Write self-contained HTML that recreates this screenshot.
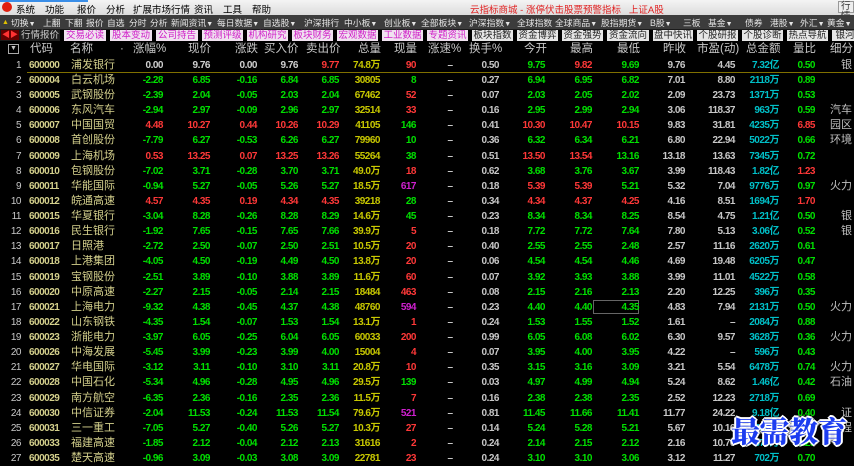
<!DOCTYPE html>
<html><head><meta charset="utf-8"><style>
*{margin:0;padding:0;box-sizing:border-box}
body{width:854px;height:461px;overflow:hidden;background:#000;font-family:"Liberation Sans","Noto Sans CJK SC",sans-serif;position:relative}
.menu{position:absolute;left:0;top:0;width:854px;height:15px;background:linear-gradient(#f4f4f4,#dcdcdc);font-size:9.5px;color:#000}
.menu span{position:absolute;top:2px}
.tb{position:absolute;left:0;top:15px;width:854px;height:14px;background:#3c3c3c;font-size:8.8px;color:#e4e4e4}
.tb span{position:absolute;top:1px;white-space:nowrap}
.tb i{font-style:normal;font-size:7px}
.tabs{position:absolute;left:0;top:29px;width:854px;height:12px;background:#1a1a1a;font-size:9.5px}
.tab{position:absolute;top:1px;height:11px;line-height:11px;text-align:center;background:#f0e2f0;color:#d020c8;border-right:4px solid #000}
.tab.d{background:#e6e6e6;color:#222}
.hd{position:absolute;left:0;top:41px;width:854px;height:16px;font-size:11.5px;color:#c8c8c8;line-height:16px}
.hd span{position:absolute;white-space:nowrap}
.r{position:absolute;left:0;width:854px;height:15px;line-height:15px;font-size:10px;font-weight:bold;letter-spacing:-0.5px}
.r span{position:absolute;top:0;text-align:right;white-space:nowrap}
.r .n{left:0;width:21px;color:#c8c8c8;font-weight:normal}
.r .cd{left:29px;color:#d4d08c;text-align:left}
.r .nm{left:71px;color:#d4d08c;text-align:left;font-size:11px;font-weight:normal;letter-spacing:0}
.a{left:120px;width:43px}.b{left:165px;width:45px}.c{left:212px;width:45px}.d{left:258px;width:40px}.e{left:299px;width:40px}.f{left:335px;width:45px;color:#c8c800}.g{left:382px;width:34px}
.h{left:440px;width:20px;text-align:center!important;color:#c8c8c8}.i{left:460px;width:39px;color:#c8c8c8}.j{left:500px;width:45px}.k{left:546px;width:46px}.l{left:593px;width:46px}.m{left:640px;width:45px;color:#c8c8c8}.o{left:686px;width:49px;color:#c8c8c8}.p{left:730px;width:49px;color:#00c0c8}.q{left:780px;width:35px}.s{left:830px;text-align:left!important;color:#c0c0c0;font-weight:normal;font-size:11px;letter-spacing:0}
.G{color:#00e000}.R{color:#ff3838}.W{color:#d0d0d0}.M{color:#d020d0}
.wm{position:absolute;left:731px;top:410px;font-family:"Noto Serif CJK SC","Liberation Serif",serif;font-weight:900;font-size:29px;color:#1c3cf0;text-shadow:-1px -1px 0 #fff,1px -1px 0 #fff,-1px 1px 0 #fff,1px 1px 0 #fff,0 2px 0 #fff,2px 0 0 #fff,0 -2px 0 #fff,-2px 0 0 #fff;letter-spacing:0}
</style></head><body>
<div class="menu">
<div style="position:absolute;left:0;top:0;width:88px;height:2px;background:#3a8ee8"></div>
<div style="position:absolute;left:2px;top:2px;width:10px;height:10px;border-radius:50%;background:#e02010"></div>
<span style="left:16px">系统</span><span style="left:45px">功能</span><span style="left:77px">报价</span><span style="left:106px">分析</span><span style="left:133px">扩展市场行情</span><span style="left:194px">资讯</span><span style="left:223px">工具</span><span style="left:252px">帮助</span>
<span style="left:470px;color:#e02020">云指标商城 - 涨停伏击股票预警指标 &nbsp;&nbsp;上证A股</span>
<span style="left:838px;top:1px;border:1px solid #999;background:#eee;padding:0 2px;height:12px;line-height:10px;color:#333">行情</span>
</div>
<div class="tb">
<span style="left:2px;color:#e0c000"><i>▲</i></span>
<span style="left:11px">切换<i>▼</i></span><span style="left:43px">上翻</span><span style="left:65px">下翻</span><span style="left:86px">报价</span><span style="left:107px">自选</span><span style="left:129px">分时</span><span style="left:150px">分析</span><span style="left:171px">新闻资讯<i>▼</i></span><span style="left:217px">每日数据<i>▼</i></span><span style="left:263px">自选股<i>▼</i></span><span style="left:304px">沪深排行</span><span style="left:344px">中小板<i>▼</i></span><span style="left:384px">创业板<i>▼</i></span><span style="left:421px">全部板块<i>▼</i></span><span style="left:469px">沪深指数<i>▼</i></span><span style="left:517px">全球指数</span><span style="left:555px">全球商品<i>▼</i></span><span style="left:601px">股指期货<i>▼</i></span><span style="left:650px">B股<i>▼</i></span><span style="left:683px">三板</span><span style="left:708px">基金<i>▼</i></span><span style="left:745px">债券</span><span style="left:770px">港股<i>▼</i></span><span style="left:800px">外汇<i>▼</i></span><span style="left:827px">黄金<i>▼</i></span>
</div>
<div class="tabs">
<span style="position:absolute;left:1px;top:1px;width:18px;height:10px;background:#600;color:#f33;font-size:8px;line-height:10px;text-align:center">◀▶</span>
<div class="tab" style="left:20px;width:44px;background:#202020;color:#ccc">行情报价</div>
<div class="tab" style="left:64px;width:46px">交易必读</div>
<div class="tab" style="left:110px;width:46px">股本变动</div>
<div class="tab" style="left:156px;width:46px">公司持告</div>
<div class="tab" style="left:202px;width:45px">预测评级</div>
<div class="tab" style="left:247px;width:45px">机构研究</div>
<div class="tab" style="left:292px;width:45px">板块财务</div>
<div class="tab" style="left:337px;width:45px">宏观数据</div>
<div class="tab" style="left:382px;width:45px">工业数据</div>
<div class="tab" style="left:427px;width:45px">专题资讯</div>
<div class="tab d" style="left:472px;width:45px">板块指数</div>
<div class="tab d" style="left:517px;width:45px">资金博弈</div>
<div class="tab d" style="left:562px;width:45px">资金强势</div>
<div class="tab d" style="left:607px;width:46px">资金流向</div>
<div class="tab d" style="left:653px;width:44px">盘中快讯</div>
<div class="tab d" style="left:697px;width:45px">个股研报</div>
<div class="tab d" style="left:742px;width:45px">个股诊断</div>
<div class="tab d" style="left:787px;width:45px">热点导航</div>
<div class="tab d" style="left:832px;width:30px">银河</div>
</div>
<div class="hd">
<span style="left:8px;top:3px;width:11px;height:10px;border:1px solid #aaa;font-size:7px;line-height:8px;text-align:center">▼</span>
<span style="left:30px">代码</span><span style="left:70px">名称</span><span style="left:120px">·</span><span style="left:133px">涨幅%</span><span style="left:188px">现价</span><span style="left:235px">涨跌</span><span style="left:264px">买入价</span><span style="left:306px">卖出价</span><span style="left:358px">总量</span><span style="left:394px">现量</span><span style="left:428px">涨速%</span><span style="left:469px">换手%</span><span style="left:524px">今开</span><span style="left:570px">最高</span><span style="left:617px">最低</span><span style="left:663px">昨收</span><span style="left:697px">市盈(动)</span><span style="left:746px">总金额</span><span style="left:793px">量比</span><span style="left:830px">细分</span>
</div>
<div style="position:absolute;left:27px;top:72px;width:827px;height:1px;background:#807000"></div>
<div style="position:absolute;left:593px;top:300px;width:46px;height:14px;border:1px solid #666"></div>

<div class="r" style="top:58px"><span class="n">1</span><span class="cd">600000</span><span class="nm">浦发银行</span><span class="a W">0.00</span><span class="b W">9.76</span><span class="c W">0.00</span><span class="d W">9.76</span><span class="e R">9.77</span><span class="f">74.8万</span><span class="g R">90</span><span class="h">–</span><span class="i">0.50</span><span class="j G">9.75</span><span class="k R">9.82</span><span class="l G">9.69</span><span class="m">9.76</span><span class="o">4.45</span><span class="p">7.32亿</span><span class="q G">0.50</span><span class="s">　银</span></div>
<div class="r" style="top:73px"><span class="n">2</span><span class="cd">600004</span><span class="nm">白云机场</span><span class="a G">-2.28</span><span class="b G">6.85</span><span class="c G">-0.16</span><span class="d G">6.84</span><span class="e G">6.85</span><span class="f">30805</span><span class="g G">8</span><span class="h">–</span><span class="i">0.27</span><span class="j G">6.94</span><span class="k G">6.95</span><span class="l G">6.82</span><span class="m">7.01</span><span class="o">8.80</span><span class="p">2118万</span><span class="q G">0.89</span></div>
<div class="r" style="top:88px"><span class="n">3</span><span class="cd">600005</span><span class="nm">武钢股份</span><span class="a G">-2.39</span><span class="b G">2.04</span><span class="c G">-0.05</span><span class="d G">2.03</span><span class="e G">2.04</span><span class="f">67462</span><span class="g R">52</span><span class="h">–</span><span class="i">0.07</span><span class="j G">2.03</span><span class="k G">2.05</span><span class="l G">2.02</span><span class="m">2.09</span><span class="o">23.73</span><span class="p">1371万</span><span class="q G">0.53</span></div>
<div class="r" style="top:103px"><span class="n">4</span><span class="cd">600006</span><span class="nm">东风汽车</span><span class="a G">-2.94</span><span class="b G">2.97</span><span class="c G">-0.09</span><span class="d G">2.96</span><span class="e G">2.97</span><span class="f">32514</span><span class="g R">33</span><span class="h">–</span><span class="i">0.16</span><span class="j G">2.95</span><span class="k G">2.99</span><span class="l G">2.94</span><span class="m">3.06</span><span class="o">118.37</span><span class="p">963万</span><span class="q G">0.59</span><span class="s">汽车</span></div>
<div class="r" style="top:118px"><span class="n">5</span><span class="cd">600007</span><span class="nm">中国国贸</span><span class="a R">4.48</span><span class="b R">10.27</span><span class="c R">0.44</span><span class="d R">10.26</span><span class="e R">10.29</span><span class="f">41105</span><span class="g G">146</span><span class="h">–</span><span class="i">0.41</span><span class="j R">10.30</span><span class="k R">10.47</span><span class="l R">10.15</span><span class="m">9.83</span><span class="o">31.81</span><span class="p">4235万</span><span class="q R">6.85</span><span class="s">园区</span></div>
<div class="r" style="top:133px"><span class="n">6</span><span class="cd">600008</span><span class="nm">首创股份</span><span class="a G">-7.79</span><span class="b G">6.27</span><span class="c G">-0.53</span><span class="d G">6.26</span><span class="e G">6.27</span><span class="f">79960</span><span class="g G">10</span><span class="h">–</span><span class="i">0.36</span><span class="j G">6.32</span><span class="k G">6.34</span><span class="l G">6.21</span><span class="m">6.80</span><span class="o">22.94</span><span class="p">5022万</span><span class="q G">0.66</span><span class="s">环境</span></div>
<div class="r" style="top:149px"><span class="n">7</span><span class="cd">600009</span><span class="nm">上海机场</span><span class="a R">0.53</span><span class="b R">13.25</span><span class="c R">0.07</span><span class="d R">13.25</span><span class="e R">13.26</span><span class="f">55264</span><span class="g G">38</span><span class="h">–</span><span class="i">0.51</span><span class="j R">13.50</span><span class="k R">13.54</span><span class="l G">13.16</span><span class="m">13.18</span><span class="o">13.63</span><span class="p">7345万</span><span class="q G">0.72</span></div>
<div class="r" style="top:164px"><span class="n">8</span><span class="cd">600010</span><span class="nm">包钢股份</span><span class="a G">-7.02</span><span class="b G">3.71</span><span class="c G">-0.28</span><span class="d G">3.70</span><span class="e G">3.71</span><span class="f">49.0万</span><span class="g R">18</span><span class="h">–</span><span class="i">0.62</span><span class="j G">3.68</span><span class="k G">3.76</span><span class="l G">3.67</span><span class="m">3.99</span><span class="o">118.43</span><span class="p">1.82亿</span><span class="q R">1.23</span></div>
<div class="r" style="top:179px"><span class="n">9</span><span class="cd">600011</span><span class="nm">华能国际</span><span class="a G">-0.94</span><span class="b G">5.27</span><span class="c G">-0.05</span><span class="d G">5.26</span><span class="e G">5.27</span><span class="f">18.5万</span><span class="g M">617</span><span class="h">–</span><span class="i">0.18</span><span class="j R">5.39</span><span class="k R">5.39</span><span class="l G">5.21</span><span class="m">5.32</span><span class="o">7.04</span><span class="p">9776万</span><span class="q G">0.97</span><span class="s">火力</span></div>
<div class="r" style="top:194px"><span class="n">10</span><span class="cd">600012</span><span class="nm">皖通高速</span><span class="a R">4.57</span><span class="b R">4.35</span><span class="c R">0.19</span><span class="d R">4.34</span><span class="e R">4.35</span><span class="f">39218</span><span class="g G">28</span><span class="h">–</span><span class="i">0.34</span><span class="j R">4.34</span><span class="k R">4.37</span><span class="l R">4.25</span><span class="m">4.16</span><span class="o">8.51</span><span class="p">1694万</span><span class="q R">1.70</span></div>
<div class="r" style="top:209px"><span class="n">11</span><span class="cd">600015</span><span class="nm">华夏银行</span><span class="a G">-3.04</span><span class="b G">8.28</span><span class="c G">-0.26</span><span class="d G">8.28</span><span class="e G">8.29</span><span class="f">14.6万</span><span class="g G">45</span><span class="h">–</span><span class="i">0.23</span><span class="j G">8.34</span><span class="k G">8.34</span><span class="l G">8.25</span><span class="m">8.54</span><span class="o">4.75</span><span class="p">1.21亿</span><span class="q G">0.50</span><span class="s">　银</span></div>
<div class="r" style="top:224px"><span class="n">12</span><span class="cd">600016</span><span class="nm">民生银行</span><span class="a G">-1.92</span><span class="b G">7.65</span><span class="c G">-0.15</span><span class="d G">7.65</span><span class="e G">7.66</span><span class="f">39.9万</span><span class="g R">5</span><span class="h">–</span><span class="i">0.18</span><span class="j G">7.72</span><span class="k G">7.72</span><span class="l G">7.64</span><span class="m">7.80</span><span class="o">5.13</span><span class="p">3.06亿</span><span class="q G">0.52</span><span class="s">　银</span></div>
<div class="r" style="top:239px"><span class="n">13</span><span class="cd">600017</span><span class="nm">日照港</span><span class="a G">-2.72</span><span class="b G">2.50</span><span class="c G">-0.07</span><span class="d G">2.50</span><span class="e G">2.51</span><span class="f">10.5万</span><span class="g R">20</span><span class="h">–</span><span class="i">0.40</span><span class="j G">2.55</span><span class="k G">2.55</span><span class="l G">2.48</span><span class="m">2.57</span><span class="o">11.16</span><span class="p">2620万</span><span class="q G">0.61</span></div>
<div class="r" style="top:254px"><span class="n">14</span><span class="cd">600018</span><span class="nm">上港集团</span><span class="a G">-4.05</span><span class="b G">4.50</span><span class="c G">-0.19</span><span class="d G">4.49</span><span class="e G">4.50</span><span class="f">13.8万</span><span class="g R">20</span><span class="h">–</span><span class="i">0.06</span><span class="j G">4.54</span><span class="k G">4.54</span><span class="l G">4.46</span><span class="m">4.69</span><span class="o">19.48</span><span class="p">6205万</span><span class="q G">0.47</span></div>
<div class="r" style="top:270px"><span class="n">15</span><span class="cd">600019</span><span class="nm">宝钢股份</span><span class="a G">-2.51</span><span class="b G">3.89</span><span class="c G">-0.10</span><span class="d G">3.88</span><span class="e G">3.89</span><span class="f">11.6万</span><span class="g R">60</span><span class="h">–</span><span class="i">0.07</span><span class="j G">3.92</span><span class="k G">3.93</span><span class="l G">3.88</span><span class="m">3.99</span><span class="o">11.01</span><span class="p">4522万</span><span class="q G">0.58</span></div>
<div class="r" style="top:285px"><span class="n">16</span><span class="cd">600020</span><span class="nm">中原高速</span><span class="a G">-2.27</span><span class="b G">2.15</span><span class="c G">-0.05</span><span class="d G">2.14</span><span class="e G">2.15</span><span class="f">18484</span><span class="g R">463</span><span class="h">–</span><span class="i">0.08</span><span class="j G">2.15</span><span class="k G">2.16</span><span class="l G">2.13</span><span class="m">2.20</span><span class="o">12.25</span><span class="p">396万</span><span class="q G">0.35</span></div>
<div class="r" style="top:300px"><span class="n">17</span><span class="cd">600021</span><span class="nm">上海电力</span><span class="a G">-9.32</span><span class="b G">4.38</span><span class="c G">-0.45</span><span class="d G">4.37</span><span class="e G">4.38</span><span class="f">48760</span><span class="g M">594</span><span class="h">–</span><span class="i">0.23</span><span class="j G">4.40</span><span class="k G">4.40</span><span class="l G">4.35</span><span class="m">4.83</span><span class="o">7.94</span><span class="p">2131万</span><span class="q G">0.50</span><span class="s">火力</span></div>
<div class="r" style="top:315px"><span class="n">18</span><span class="cd">600022</span><span class="nm">山东钢铁</span><span class="a G">-4.35</span><span class="b G">1.54</span><span class="c G">-0.07</span><span class="d G">1.53</span><span class="e G">1.54</span><span class="f">13.1万</span><span class="g R">1</span><span class="h">–</span><span class="i">0.24</span><span class="j G">1.53</span><span class="k G">1.55</span><span class="l G">1.52</span><span class="m">1.61</span><span class="o">–</span><span class="p">2084万</span><span class="q G">0.88</span></div>
<div class="r" style="top:330px"><span class="n">19</span><span class="cd">600023</span><span class="nm">浙能电力</span><span class="a G">-3.97</span><span class="b G">6.05</span><span class="c G">-0.25</span><span class="d G">6.04</span><span class="e G">6.05</span><span class="f">60033</span><span class="g R">200</span><span class="h">–</span><span class="i">0.99</span><span class="j G">6.05</span><span class="k G">6.08</span><span class="l G">6.02</span><span class="m">6.30</span><span class="o">9.57</span><span class="p">3628万</span><span class="q G">0.36</span><span class="s">火力</span></div>
<div class="r" style="top:345px"><span class="n">20</span><span class="cd">600026</span><span class="nm">中海发展</span><span class="a G">-5.45</span><span class="b G">3.99</span><span class="c G">-0.23</span><span class="d G">3.99</span><span class="e G">4.00</span><span class="f">15004</span><span class="g R">4</span><span class="h">–</span><span class="i">0.07</span><span class="j G">3.95</span><span class="k G">4.00</span><span class="l G">3.95</span><span class="m">4.22</span><span class="o">–</span><span class="p">596万</span><span class="q G">0.43</span></div>
<div class="r" style="top:360px"><span class="n">21</span><span class="cd">600027</span><span class="nm">华电国际</span><span class="a G">-3.12</span><span class="b G">3.11</span><span class="c G">-0.10</span><span class="d G">3.10</span><span class="e G">3.11</span><span class="f">20.8万</span><span class="g R">10</span><span class="h">–</span><span class="i">0.35</span><span class="j G">3.15</span><span class="k G">3.16</span><span class="l G">3.09</span><span class="m">3.21</span><span class="o">5.54</span><span class="p">6478万</span><span class="q G">0.74</span><span class="s">火力</span></div>
<div class="r" style="top:375px"><span class="n">22</span><span class="cd">600028</span><span class="nm">中国石化</span><span class="a G">-5.34</span><span class="b G">4.96</span><span class="c G">-0.28</span><span class="d G">4.95</span><span class="e G">4.96</span><span class="f">29.5万</span><span class="g G">139</span><span class="h">–</span><span class="i">0.03</span><span class="j G">4.97</span><span class="k G">4.99</span><span class="l G">4.94</span><span class="m">5.24</span><span class="o">8.62</span><span class="p">1.46亿</span><span class="q G">0.42</span><span class="s">石油</span></div>
<div class="r" style="top:391px"><span class="n">23</span><span class="cd">600029</span><span class="nm">南方航空</span><span class="a G">-6.35</span><span class="b G">2.36</span><span class="c G">-0.16</span><span class="d G">2.35</span><span class="e G">2.36</span><span class="f">11.5万</span><span class="g R">7</span><span class="h">–</span><span class="i">0.16</span><span class="j G">2.38</span><span class="k G">2.38</span><span class="l G">2.35</span><span class="m">2.52</span><span class="o">12.23</span><span class="p">2718万</span><span class="q G">0.69</span></div>
<div class="r" style="top:406px"><span class="n">24</span><span class="cd">600030</span><span class="nm">中信证券</span><span class="a G">-2.04</span><span class="b G">11.53</span><span class="c G">-0.24</span><span class="d G">11.53</span><span class="e G">11.54</span><span class="f">79.6万</span><span class="g M">521</span><span class="h">–</span><span class="i">0.81</span><span class="j G">11.45</span><span class="k G">11.66</span><span class="l G">11.41</span><span class="m">11.77</span><span class="o">24.22</span><span class="p">9.18亿</span><span class="q G">0.40</span><span class="s">　证</span></div>
<div class="r" style="top:421px"><span class="n">25</span><span class="cd">600031</span><span class="nm">三一重工</span><span class="a G">-7.05</span><span class="b G">5.27</span><span class="c G">-0.40</span><span class="d G">5.26</span><span class="e G">5.27</span><span class="f">10.3万</span><span class="g R">27</span><span class="h">–</span><span class="i">0.14</span><span class="j G">5.24</span><span class="k G">5.28</span><span class="l G">5.21</span><span class="m">5.67</span><span class="o">10.16</span><span class="p">5402万</span><span class="q G">0.58</span><span class="s">工程</span></div>
<div class="r" style="top:436px"><span class="n">26</span><span class="cd">600033</span><span class="nm">福建高速</span><span class="a G">-1.85</span><span class="b G">2.12</span><span class="c G">-0.04</span><span class="d G">2.12</span><span class="e G">2.13</span><span class="f">31616</span><span class="g R">2</span><span class="h">–</span><span class="i">0.24</span><span class="j G">2.14</span><span class="k G">2.15</span><span class="l G">2.12</span><span class="m">2.16</span><span class="o">10.70</span><span class="p">679万</span><span class="q G">0.25</span></div>
<div class="r" style="top:451px"><span class="n">27</span><span class="cd">600035</span><span class="nm">楚天高速</span><span class="a G">-0.96</span><span class="b G">3.09</span><span class="c G">-0.03</span><span class="d G">3.08</span><span class="e G">3.09</span><span class="f">22781</span><span class="g R">23</span><span class="h">–</span><span class="i">0.24</span><span class="j G">3.10</span><span class="k G">3.10</span><span class="l G">3.06</span><span class="m">3.12</span><span class="o">11.27</span><span class="p">702万</span><span class="q G">0.70</span></div>

<div class="wm">最需教育</div>
</body></html>
